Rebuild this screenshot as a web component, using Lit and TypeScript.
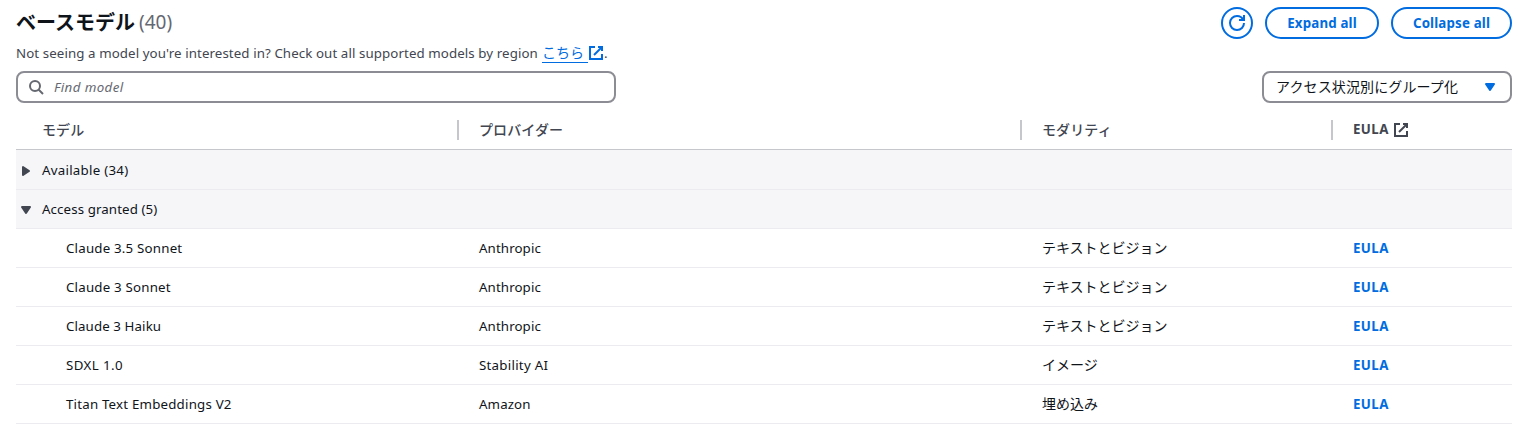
import { LitElement, html, css, svg } from "lit";
import { customElement, property, state } from "lit/decorators.js";
import { classMap } from "lit/directives/class-map.js";

interface Model {
  name: string;
  tone: string;
  provider: string;
  providerTone: string;
  modality: string;
}

const GRANTED: Model[] = [
  { name: "Claude 3.5 Sonnet", tone: "wide", provider: "Anthropic", providerTone: "snug", modality: "テキストとビジョン" },
  { name: "Claude 3 Sonnet", tone: "wide", provider: "Anthropic", providerTone: "snug", modality: "テキストとビジョン" },
  { name: "Claude 3 Haiku", tone: "snug", provider: "Anthropic", providerTone: "snug", modality: "テキストとビジョン" },
  { name: "SDXL 1.0", tone: "wider", provider: "Stability AI", providerTone: "loose", modality: "イメージ" },
  { name: "Titan Text Embeddings V2", tone: "wide", provider: "Amazon", providerTone: "snug", modality: "埋め込み" },
];

const GLYPHS = {
  external: svg`<path d="M10 2h4v4"/><path d="m6 10 8-8"/><path d="M14 9.048V14H2V2h5"/>`,
  refresh: svg`<path d="M10 5h5V0"/><path d="M15 8a6.957 6.957 0 0 1-7 7 6.957 6.957 0 0 1-7-7 6.957 6.957 0 0 1 7-7 6.87 6.87 0 0 1 6.3 4"/>`,
  search: svg`<circle cx="7" cy="7" r="5"/><path d="m15 15-4.5-4.5"/>`,
  down: svg`<path class="solid" d="M4 5h8l-4 6-4-6z"/>`,
  right: svg`<path class="solid" d="M5 4v8l6-4-6-4z"/>`,
};

@customElement("ui-icon")
class UiIcon extends LitElement {
  static styles = css`
    :host { display: inline-block; width: 16px; height: 16px; flex: none; }
    svg { display: block; width: 16px; height: 16px; overflow: visible; fill: none; stroke: currentColor; stroke-width: 2; }
    .solid { fill: currentColor; stroke-width: 2; stroke-linejoin: round; }
  `;
  @property() name: keyof typeof GLYPHS = "external";
  render() {
    return html`<svg viewBox="0 0 16 16" aria-hidden="true">${GLYPHS[this.name]}</svg>`;
  }
}

@customElement("app-root")
class AppRoot extends LitElement {
  static styles = css`
    :host {
      display: block;
      box-sizing: border-box;
      height: 424px;
      padding: 7px 2px 0 16px;
      overflow: hidden;
      background: #fff;
      color: #0f141a;
      font: 14px/20px "Noto Sans", "Noto Sans CJK JP", sans-serif;
    }
    * { box-sizing: border-box; }
    .lat { font-size: 13.3px; white-space: pre; }
    .snug { letter-spacing: 0.1px; }
    .wide { letter-spacing: 0.2px; }
    .loose { letter-spacing: 0.26px; }
    .wider { letter-spacing: 0.4px; }
    .jp { font-family: "Noto Sans CJK JP", sans-serif; white-space: nowrap; }
    .header { display: flex; justify-content: space-between; height: 64px; }
    h1 { display: flex; align-items: center; gap: 4px; margin: 0; height: 30px; font-size: 20px; line-height: 30px; font-weight: 700; }
    .count { color: #656871; font-weight: 400; font-size: 19px; }
    h1 .jp { width: 119px; }
    .desc { display: flex; align-items: center; margin: 6px 0 0; height: 20px; color: #424650; }
    .intro { width: 526px; letter-spacing: 0.09px; }
    .desc a { display: flex; align-items: center; color: #006ce0; text-decoration: none; }
    .desc .jp { width: 46px; height: 20px; line-height: 18px; border-bottom: 1px solid #006ce0; }
    .actions { display: flex; gap: 12px; height: 32px; }
    button { display: flex; align-items: center; justify-content: center; height: 32px; padding: 0; border: 2px solid #006ce0; border-radius: 16px; background: #fff; color: #006ce0; font: 700 13.3px/20px "Noto Sans", sans-serif; letter-spacing: 0.17px; white-space: nowrap; }
    .refresh { width: 32px; }
    .expand { width: 114px; }
    .collapse { width: 121px; }
    .tools { display: flex; justify-content: space-between; }
    .box { display: flex; align-items: center; height: 32px; border: 2px solid #8c8c94; border-radius: 8px; background: #fff; }
    .search { width: 600px; padding-left: 10px; gap: 10px; color: #656871; font-style: italic; }
    .select { width: 250px; padding: 0 12px; justify-content: space-between; letter-spacing: 0.12px; }
    .select .jp { padding-bottom: 2px; }
    .select ui-icon { color: #006ce0; }
    .row { display: grid; grid-template-columns: 443px 563px 311px 1fr; align-items: center; height: 39px; border-bottom: 1px solid #ebebf0; }
    .row .jp { display: block; padding-bottom: 3px; }
    .head { height: 47px; padding-top: 7px; border-color: #c6c6cd; color: #424650; font-weight: 700; }
    .head > div { display: flex; align-items: center; height: 20px; border-right: 2px solid #c6c6cd; }
    .head > div:last-child { border-right: 0; gap: 3px; }
    .head .lat { width: 37px; padding-bottom: 2px; }
    .head .jp { font-weight: 500; letter-spacing: 0.12px; padding-bottom: 2px; }
    .row > div { padding-left: 20px; }
    .row > div.first { padding-left: 26px; }
    .row > div.nested { padding-left: 50px; }
    .group { display: flex; gap: 8px; padding-left: 2px; background: #f6f6f9; }
    .group ui-icon { color: #424650; margin-top: 1px; }
    .head + .group { height: 40px; padding-top: 1px; }
    .eula { color: #006ce0; font-weight: 700; text-decoration: none; }
  `;

  @state() private open = { available: false, granted: true };

  private toggleAll(value: boolean) {
    this.open = { available: value, granted: value };
  }

  private group(key: "available" | "granted", label: string, tone: string) {
    const open = this.open[key];
    return html`<div class="row group" @click=${() => (this.open = { ...this.open, [key]: !open })}>
      <ui-icon name=${open ? "down" : "right"}></ui-icon><span class=${classMap({ lat: true, [tone]: true })}>${label}</span>
    </div>`;
  }

  render() {
    return html`
      <header class="header">
        <div>
          <h1><span class="jp">ベースモデル</span><span class="count">(40)</span></h1>
          <p class="desc"><span class="lat intro">Not seeing a model you're interested in? Check out all supported models by region</span><a href="#"><span class="jp">こちら</span><ui-icon name="external"></ui-icon></a><span class="lat">.</span></p>
        </div>
        <div class="actions">
          <button class="refresh" aria-label="Refresh"><ui-icon name="refresh"></ui-icon></button>
          <button class="expand" @click=${() => this.toggleAll(true)}>Expand all</button>
          <button class="collapse" @click=${() => this.toggleAll(false)}>Collapse all</button>
        </div>
      </header>
      <div class="tools">
        <div class="box search"><ui-icon name="search"></ui-icon><span class="lat wider">Find model</span></div>
        <div class="box select"><span class="jp">アクセス状況別にグループ化</span><ui-icon name="down"></ui-icon></div>
      </div>
      <div class="row head">
        <div class="first"><span class="jp">モデル</span></div>
        <div><span class="jp">プロバイダー</span></div>
        <div><span class="jp">モダリティ</span></div>
        <div><span class="lat wider">EULA</span><ui-icon name="external"></ui-icon></div>
      </div>
      ${this.group("available", "Available (34)", "loose")}
      ${this.group("granted", "Access granted (5)", "snug")}
      ${this.open.granted
        ? GRANTED.map(
            (m) => html`<div class="row">
              <div class="nested"><span class=${classMap({ lat: true, [m.tone]: true })}>${m.name}</span></div>
              <div><span class=${classMap({ lat: true, [m.providerTone]: true })}>${m.provider}</span></div>
              <div><span class="jp">${m.modality}</span></div>
              <div><a class="lat wider eula" href="#">EULA</a></div>
            </div>`
          )
        : null}
    `;
  }
}
